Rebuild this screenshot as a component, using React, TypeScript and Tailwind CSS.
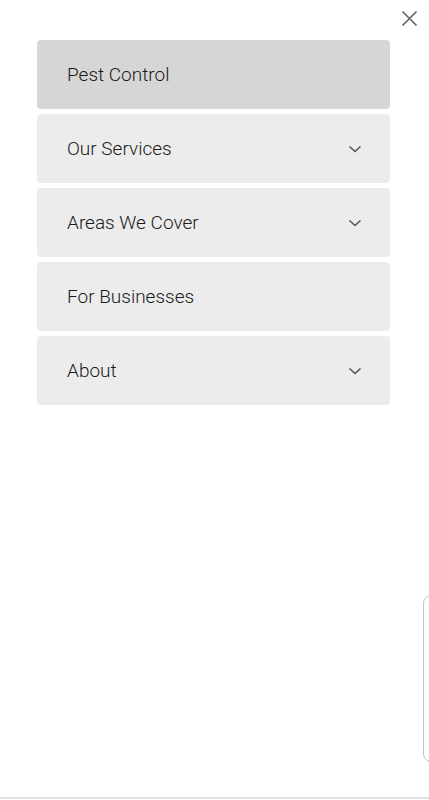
import React from "react";

const Chevron = () => (
  <svg width="14" height="8" viewBox="0 0 14 8" fill="none" className="shrink-0 mt-[1px]">
    <path d="M1.5 1.5 L7 6.5 L12.5 1.5" stroke="#555" strokeWidth="1.6" />
  </svg>
);

const items: { label: string; chevron: boolean; active?: boolean }[] = [
  { label: "Pest Control", chevron: false, active: true },
  { label: "Our Services", chevron: true },
  { label: "Areas We Cover", chevron: true },
  { label: "For Businesses", chevron: false },
  { label: "About", chevron: true },
];

export default function App() {
  return (
    <div className="relative w-[429px] h-[800px] bg-white overflow-hidden" style={{ fontFamily: "Roboto, 'Liberation Sans', sans-serif" }}>
      <button className="absolute left-[401px] top-[10px] w-[17px] h-[17px]">
        <svg width="17" height="17" viewBox="0 0 17 17" fill="none">
          <path d="M1.5 1.5 L15.5 15.5 M15.5 1.5 L1.5 15.5" stroke="#666" strokeWidth="1.7" />
        </svg>
      </button>
      <nav className="flex flex-col gap-[5px] pt-[40px] pl-[37px] w-[390px]">
        {items.map((it) => (
          <div
            key={it.label}
            className={`flex items-center justify-between h-[69px] rounded-[4px] pl-[30px] pr-[28px] ${it.active ? "bg-[#d6d6d6]" : "bg-[#ececec]"}`}
          >
            <span className="text-[19px] font-light text-[#1a1a1a] pt-[2px]">{it.label}</span>
            {it.chevron && <Chevron />}
          </div>
        ))}
      </nav>
      <div className="absolute left-[423px] top-[595px] w-[30px] h-[167px] rounded-[8px] border border-[#c4c4c4]" />
      <div className="absolute left-0 bottom-[1px] w-full h-[2px] bg-[#e2e2e2]" />
    </div>
  );
}
